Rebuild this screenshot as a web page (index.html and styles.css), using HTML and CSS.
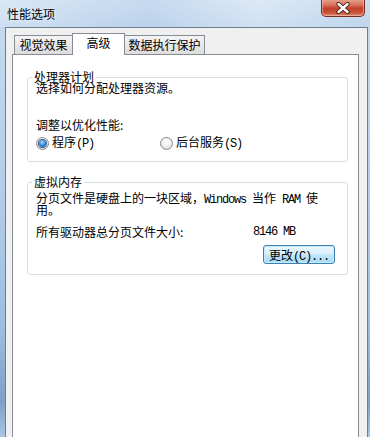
FILE: index.html
```html
<!DOCTYPE html>
<html lang="zh-CN">
<head>
<meta charset="utf-8">
<title>性能选项</title>
<link rel="stylesheet" href="styles.css">
</head>
<body>
<div class="window">
  <div class="titlebar">
    <span class="title">性能选项</span>
    <div class="close">
      <svg width="16" height="12" viewBox="0 0 16 12">
        <path d="M3.5 2 L12.5 10 M12.5 2 L3.5 10" stroke="#3a1a14" stroke-width="4.2" stroke-linecap="round"/>
        <path d="M3.5 2 L12.5 10 M12.5 2 L3.5 10" stroke="#ffffff" stroke-width="2.4" stroke-linecap="round"/>
      </svg>
    </div>
  </div>
  <div class="client">
    <div class="tabs">
      <div class="tab tab-1">视觉效果</div>
      <div class="tab tab-2 active">高级</div>
      <div class="tab tab-3">数据执行保护</div>
    </div>
    <div class="page">
      <fieldset class="group group-cpu">
        <legend>处理器计划</legend>
        <p class="line">选择如何分配处理器资源。</p>
        <p class="line adjust">调整以优化性能:</p>
        <div class="radios">
          <div class="radio-item first">
            <span class="radio checked"></span>
            <span>程序<span class="lat">(P)</span></span>
          </div>
          <div class="radio-item">
            <span class="radio"></span>
            <span>后台服务<span class="lat">(S)</span></span>
          </div>
        </div>
      </fieldset>
      <fieldset class="group group-mem">
        <legend>虚拟内存</legend>
        <p class="desc">分页文件是硬盘上的一块区域，<span class="lat">Windows </span>当作<span class="lat"> RAM </span>使<br>用。</p>
        <div class="size-row">
          <span class="size-label">所有驱动器总分页文件大小:</span>
          <span class="lat">8146 MB</span>
        </div>
        <div class="btn-row">
          <div class="button">更改<span class="lat">(C)...</span></div>
        </div>
      </fieldset>
    </div>
  </div>
</div>
</body>
</html>
```
FILE: styles.css
```css
* { box-sizing: border-box; }
html, body { margin: 0; padding: 0; }
body {
  width: 370px;
  height: 437px;
  overflow: hidden;
  font-family: "Noto Sans CJK SC", sans-serif;
  font-size: 12px;
  color: #000;
  background: #b9d2ec;
}
.window {
  height: 437px;
  display: flex;
  flex-direction: column;
  background: linear-gradient(to bottom, #d3e3f4 0, #c4d9ef 27px, #b2cdea 45%, #9dbde0 75%, #7f9fc4 92%, #a9c6e5 100%);
}
.titlebar {
  height: 27px;
  flex: none;
  display: flex;
  justify-content: space-between;
  align-items: flex-start;
  padding: 0 5px 0 7px;
  background: linear-gradient(90deg, rgba(255,255,255,0.15), rgba(160,190,225,0.25) 40%, rgba(255,255,255,0.2) 70%, rgba(170,200,230,0.2));
}
.title {
  margin-top: 6px;
  line-height: 15px;
  font-size: 12px;
  color: #000;
  text-shadow: 0 0 5px #e8f1fb, 0 0 3px #e8f1fb;
}
.close {
  width: 44px;
  height: 18px;
  margin-top: -1px;
  border: 1px solid #7a2b20;
  border-top: none;
  border-radius: 0 0 5px 5px;
  background: linear-gradient(#e8a693 0, #d7735e 35%, #c2412c 55%, #c9523a 80%, #dd8c6e 100%);
  box-shadow: inset 0 0 0 1px rgba(255,220,210,0.45);
  display: flex;
  align-items: center;
  justify-content: center;
}
.client {
  flex: 1;
  margin: 0 2px 0 5px;
  background: #f0f0f0;
  border: 1px solid #707d8c;
  border-bottom: none;
  display: flex;
  flex-direction: column;
  min-height: 0;
}
.tabs {
  flex: none;
  height: 26px;
  padding: 5px 0 0 8px;
  display: flex;
  align-items: flex-end;
}
.tab {
  height: 19px;
  border: 1px solid #898c95;
  border-bottom: none;
  background: linear-gradient(#f4f4f4, #e9e9e9 50%, #dcdcdc);
  line-height: 18px;
  text-align: center;
  font-size: 12px;
  position: relative;
}
.tab-1 { width: 59px; }
.tab-2 { width: 53px; margin-left: -1px; }
.tab-3 { width: 81px; margin-left: -1px; }
.tab.active {
  height: 22px;
  margin-bottom: -1px;
  background: #fff;
  z-index: 1;
  line-height: 17px;
  padding-bottom: 4px;
}
.page {
  flex: 1;
  margin: 0 8px 0 6px;
  background: #fff;
  border: 1px solid #898c95;
  border-bottom: none;
  display: flex;
  flex-direction: column;
}
.group {
  margin: 17px 10px 0 14px;
  padding: 0 12px 11px 8px;
  border: 1px solid #d5dfe5;
  border-radius: 3px;
  min-width: 0;
}
.group legend {
  margin-left: -4px;
  padding: 0 2px;
  line-height: 10px;
  font-size: 12px;
}
.group-mem {
  margin-top: 15px;
  padding-bottom: 10px;
}
.line {
  margin: 0;
  line-height: 12px;
}
.adjust { margin-top: 25px; }
.radios {
  margin-top: 5px;
  height: 14px;
  display: flex;
  align-items: center;
}
.radio-item {
  display: flex;
  align-items: center;
  gap: 2px;
  line-height: 14px;
}
.radio-item.first { width: 124px; }
.radio {
  width: 13px;
  height: 13px;
  border-radius: 50%;
  border: 1px solid #8a8a8a;
  background: radial-gradient(circle at 50% 35%, #ffffff 0, #f2f2f2 40%, #d2d2d2 100%);
  display: flex;
  align-items: center;
  justify-content: center;
  flex: none;
  margin-right: 1px;
}
.radio.checked::after {
  content: "";
  width: 7px;
  height: 7px;
  border-radius: 50%;
  background: radial-gradient(circle at 45% 35%, #b6e0fb 0, #3a8fd8 45%, #1a4f9a 100%);
  box-shadow: 0 0 0 1px #2a5a8f;
}
.lat {
  font-family: "Liberation Mono", monospace;
  font-size: 12px;
  letter-spacing: -1.2px;
}
.desc {
  margin: 6px 0 0;
  line-height: 10px;
}
.size-row {
  margin-top: 12px;
  display: flex;
  line-height: 10px;
}
.size-label { width: 217px; }
.btn-row {
  margin-top: 8px;
  display: flex;
  justify-content: flex-end;
}
.button {
  width: 72px;
  height: 19px;
  border: 1px solid #3c7fb1;
  border-radius: 3px;
  background: linear-gradient(#eaf6fd 0, #d9f0fc 45%, #bee6fd 55%, #a7d9f5 100%);
  box-shadow: inset 0 0 0 1px #c4ecfd;
  line-height: 17px;
  text-align: center;
}
```
